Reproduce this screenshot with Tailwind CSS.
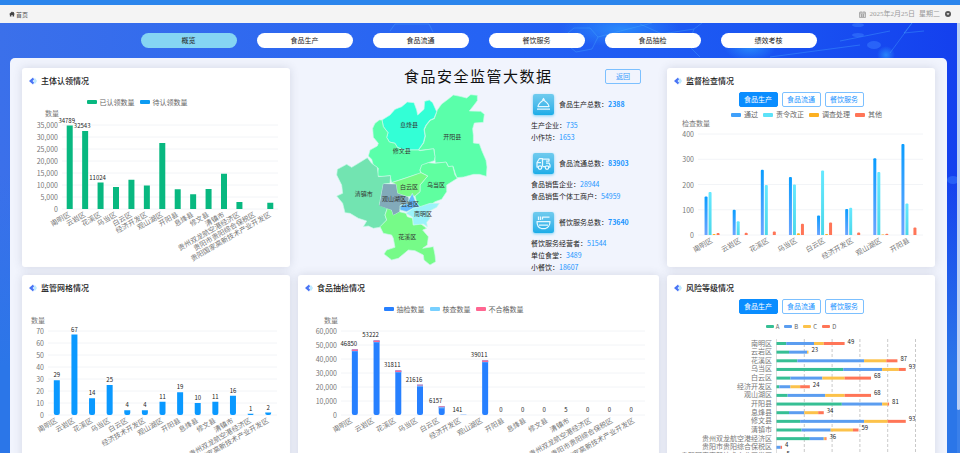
<!DOCTYPE html>
<html lang="zh-CN">
<head>
  <meta charset="UTF-8">
  <meta name="viewport" content="width=device-width, initial-scale=1.0">
  <title>食品安全监管大数据</title>
  <script src="https://cdn.jsdelivr.net/npm/@tailwindcss/browser@4"></script>
</head>
<body class="h-screen overflow-hidden flex flex-col bg-[#2b73e8] text-[7px] text-[#222] font-['Noto_Sans_CJK_SC',sans-serif]">
  <!-- 顶部 -->
  <div class="h-[5px] shrink-0 bg-[#2b85ec]"></div>
  <header class="h-[18px] shrink-0 px-[9px] flex items-center justify-between bg-[#f4f4f4] text-[#555]">
    <a href="#" class="flex items-center gap-px text-[6px]">
      <svg class="size-[6px]" viewBox="0 0 12 12" fill="#444"><path d="M6 1 0 6.500h1.800V11h3V8h2.400v3h3V6.500H12L10 4.600V2H8.500v1.300z"/></svg>
      首页
    </a>
    <div class="flex items-center gap-1 text-[#999] font-['Liberation_Serif','Noto_Sans_CJK_SC',serif]">
      <svg class="size-[7px]" viewBox="0 0 14 14" fill="none" stroke="#999" stroke-width="1.500"><path d="M1 2.500h12v10.500H1zM1 5.500h12M4 .5v3M10 .5v3M3 8h8M3 10.500h8M5 6v6M9 6v6"/></svg>
      <span>2025年2月25日</span>
      <span>星期二</span>
      <svg class="size-[6px] ml-px" viewBox="0 0 12 12"><circle cx="6" cy="6" r="6" fill="#555"/><path d="M3 4.500h6L6 8.500z" fill="#f4f4f4"/></svg>
    </div>
  </header>

  <div class="flex-1 min-h-0 flex">
    <div class="relative flex-1 min-w-0 flex flex-col bg-linear-to-b from-[#3a6fea] to-[#2b76e8]">
      <!-- 背景 -->
      <svg class="absolute inset-0 size-full" viewBox="0 0 957 430" preserveAspectRatio="xMidYMin slice" fill="none">
        <defs>
          <linearGradient id="sky"><stop offset="0" stop-color="#3b70ea"/><stop offset=".5" stop-color="#2563f4"/><stop offset=".8" stop-color="#1a55f2"/><stop offset="1" stop-color="#1440ee"/></linearGradient>
          <linearGradient id="fade" x2="0" y2="1"><stop offset=".35" stop-color="#2b76e8" stop-opacity="0"/><stop offset=".8" stop-color="#2b76e8"/></linearGradient>
          <radialGradient id="glow"><stop offset="0" stop-color="#2f9dff" stop-opacity=".7"/><stop offset="1" stop-color="#2f9dff" stop-opacity="0"/></radialGradient>
        </defs>
        <rect width="957" height="430" fill="url(#sky)"/>
        <rect width="957" height="430" fill="url(#fade)"/>
        <ellipse cx="620" cy="6" rx="60" ry="18" fill="url(#glow)"/>
        <ellipse cx="750" cy="24" rx="26" ry="14" fill="url(#glow)"/>
        <circle cx="886" cy="32" r="9" fill="url(#glow)"/>
        <g stroke="#4ab0ff" stroke-opacity=".35">
          <path d="M390 8l5-7h34l4 8M568 10l6-5h16l8 9-6 12-16 3-6-5M598 14l30-8 24-6M640 1l22 10 32-5 8-6M694 6l-6 16 12 12M890 30l22-30M912 0l-8 10 20-2M840 18l50-10M770 34l90-12"/>
        </g>
        <g fill="#3c7dff" fill-opacity=".5"><ellipse cx="858" cy="2" rx="6" ry="2"/><ellipse cx="858" cy="12" rx="6" ry="2"/><ellipse cx="874" cy="22" rx="7" ry="4"/><ellipse cx="953" cy="157" rx="6" ry="4"/></g>
      </svg>

      <!-- 导航 -->
      <nav class="relative flex justify-center gap-5 py-[10px]">
        <a href="#" class="w-24 h-[15px] rounded-full bg-[#85d5f3] flex items-center justify-center">概览</a>
        <a href="#" class="w-24 h-[15px] rounded-full bg-white flex items-center justify-center">食品生产</a>
        <a href="#" class="w-24 h-[15px] rounded-full bg-white flex items-center justify-center">食品流通</a>
        <a href="#" class="w-24 h-[15px] rounded-full bg-white flex items-center justify-center">餐饮服务</a>
        <a href="#" class="w-24 h-[15px] rounded-full bg-white flex items-center justify-center">食品抽检</a>
        <a href="#" class="w-24 h-[15px] rounded-full bg-white flex items-center justify-center">绩效考核</a>
      </nav>

      <main class="relative flex-1 min-h-0 overflow-hidden mx-[10px] px-3 pt-[10px] rounded-t-[5px] bg-[#f1f4fd]">
        <div class="grid grid-cols-[268fr_361fr_268fr] gap-2">
          <!-- 主体认领情况 -->
          <section class="rounded-[3px] bg-white shadow-[0_0_10px_rgba(60,70,100,0.16)]">
            <h2 class="h-6 pt-0.5 pl-[7px] flex items-center gap-1 text-[8px] font-medium">
              <svg class="w-2 h-2" viewBox="0 0 16 16"><path d="M9 3h4l3 5-3 5H9z" fill="#bfeaff"/><path d="M8 1 0 8l8 7 2-4-3-3 3-3z" fill="#4a74f5"/></svg>主体认领情况
            </h2>
            <div class="h-5 pr-[38px] flex items-center justify-center gap-[5px] text-[#666]">
              <span class="flex items-center gap-[3px]"><i class="w-[10px] h-1 rounded-[1px] bg-[#08b880]"></i>已认领数量</span>
              <span class="flex items-center gap-[3px]"><i class="w-[10px] h-1 rounded-[1px] bg-[#0c9bf2]"></i>待认领数量</span>
            </div>
            <svg id="claim-chart" class="block w-full overflow-visible" viewBox="0 0 268 155"></svg>
          </section>

          <!-- 中间地图 -->
          <section class="-mb-2">
            <div class="h-4 flex items-center">
              <h1 class="flex-1 pl-[106px] text-[15px] leading-4 tracking-widest whitespace-nowrap text-[#111]">食品安全监管大数据</h1>
              <button class="w-9 h-[15px] mr-[18px] rounded-[2px] border border-[#7cc0ff] text-[#3a9dfc] leading-none">返回</button>
            </div>
            <div class="flex pl-[22px]">
              <svg class="w-[200px] h-[191px] shrink-0" viewBox="0 72 600 573" stroke="#c8fbe8" stroke-width="2" stroke-linejoin="round">
                <path fill="#5affaa" d="M352 150l13-18 20-15 15-12 20 4 20 5 12-10 20 2v16l-12 16-12 15 34 1 11 9-3 24-27 2-5 17 2 20v23l18 2 8 22 12 28 3 20-2 28-21-6-17 0-30 8-20 2-5-12-7-22-13 2-7-14-33 2-4-42-41 4-5-2 15-20 5-20-3-20 6-13 12-15 12-5z"/>
                <path fill="#33ffd6" d="M186 180l24-15 15-17 20-8 17-14 20 2 8 22 3 15 19-17 2-24 14-4 10 8 8 18 4 9-8 20-12 5-12 15-6 13 3 20-5 20-15 22h-45l-18-8-7-12-17-4-8-14 4-14-14-18z"/>
                <path fill="#5affaa" d="M178 180l8 0 4 20 14 18-4 14 8 14 17 4 7 12 18 8h45l5 2 41-6 4 24-2 12-18 6-20 12-5 10 3 12-18 3-30 10-40 13-5-21-20 3-18-2 3-23-15-10-5-17-10-10 5-18 22-12 3-8-15-18-2-27 7-15z"/>
                <path fill="#72e4b1" d="M142 293l13 17 17 12 3 28 37-3-2 23-20 2-12 63 24 10-7 20 5 15-20 22-20 3-15-7-15 2 10-17-25-8-25-15-15-2-7-28-18-22 18-8-3-25-15-30 2-17 28-15 15 9 20-12z"/>
                <path fill="#5fffa0" d="M300 330l5-15 20-7 20 2 33-4 7 14 13-2 7 27 7 10-32 20v20l-15 23-20 7-20 15-30 5-10-37 15-13v-20l23-27-20-10z"/>
                <path fill="#76fb88" d="M202 445l13 5 5 15 18-10 20 5 4 10 16 5 2 20 20-5 20 15-12 5 17 20-3 25-14 10 32-5 5 25 2 20-17 10-18-15-2-15-25-13-20-2-30 25-20 5-23-18 8-12 25-8-5-27-5-10-25-5-10-20 20-20-5-15z"/>
                <path fill="#79fb86" d="M215 368l45-15 43-15 20 10-23 27v20l-15 13-23 2-30-10-4-27z"/>
                <path fill="#82aaba" stroke="none" d="M190 372l38 1 4 27 33 12 3 16-26 7-4 20-18 10-5-15-37-13z"/>
                <path fill="#66bbfd" d="M265 422l12-22 10 25 13 15-20 5-20 10-20-5v-13l28-9z"/>
                <path fill="#9bf3fa" d="M258 460l22-15 20-5 30-10 28 0-8 12-25 13 5 20-10 12 2 13-12-8-30 3-2-23z"/>
                <g class="text-[18px]" fill="#333" stroke="none" text-anchor="middle">
                  <text x="267" y="202">息烽县</text><text x="397" y="237">开阳县</text><text x="245" y="278">修文县</text>
                  <text x="131" y="407">清镇市</text><text x="267" y="386">白云区</text><text x="348" y="381">乌当区</text>
                  <text x="222" y="423">观山湖区</text><text x="270" y="438">云岩区</text><text x="309" y="469">南明区</text><text x="262" y="538">花溪区</text>
                </g>
              </svg>
              <!-- 统计 -->
              <div class="ml-[11px] pt-[9px] whitespace-nowrap leading-3">
                <div class="h-[22px] mb-1 pl-0.5 flex items-center gap-[5px]">
                  <span class="size-[21px] rounded-[2px] flex items-center justify-center bg-linear-to-b from-[#6fcbee] to-[#18ade8] shadow-[0_1px_3px_#7cd0f5]">
                    <svg class="size-[15px]" viewBox="0 0 30 30" fill="none" stroke="#e6f8ff" stroke-width="2.500" stroke-linejoin="round"><path d="M4 19c1-6 5-9 11-13 6 4 10 7 11 13zM2 24h26M13 6l2-3 2 3"/></svg>
                  </span>
                  <span>食品生产总数：<b class="text-[#1a94ff]">2388</b></span>
                </div>
                <p>生产企业：<span class="text-[#1a94ff]">735</span></p>
                <p>小作坊：<span class="text-[#1a94ff]">1653</span></p>
                <div class="h-[22px] mt-[9px] mb-1 pl-0.5 flex items-center gap-[5px]">
                  <span class="size-[21px] rounded-[2px] flex items-center justify-center bg-linear-to-b from-[#6fcbee] to-[#18ade8] shadow-[0_1px_3px_#7cd0f5]">
                    <svg class="size-[15px]" viewBox="0 0 30 30" fill="none" stroke="#e6f8ff" stroke-width="2.500" stroke-linejoin="round"><path d="M4 22H2v-9l5-8h6v16M13 6h13v4h-6M20 14h6l2 4v4h-2M2 13h8M13 21h5"/><circle cx="8" cy="23" r="3.500"/><circle cx="22" cy="23" r="3.500"/></svg>
                  </span>
                  <span>食品流通总数：<b class="text-[#1a94ff]">83903</b></span>
                </div>
                <p>食品销售企业：<span class="text-[#1a94ff]">28944</span></p>
                <p>食品销售个体工商户：<span class="text-[#1a94ff]">54959</span></p>
                <div class="h-[22px] mt-[9px] mb-1 pl-0.5 flex items-center gap-[5px]">
                  <span class="size-[21px] rounded-[2px] flex items-center justify-center bg-linear-to-b from-[#6fcbee] to-[#18ade8] shadow-[0_1px_3px_#7cd0f5]">
                    <svg class="size-[15px]" viewBox="0 0 30 30" fill="none" stroke="#e6f8ff" stroke-width="2.500" stroke-linejoin="round"><path d="M2 13h26c0 8-5 13-9 14h-8C6 26 2 21 2 13zM6 20h18M5 3v7M9 3v7M13 9V4h14"/></svg>
                  </span>
                  <span>餐饮服务总数：<b class="text-[#1a94ff]">73640</b></span>
                </div>
                <p>餐饮服务经营者：<span class="text-[#1a94ff]">51544</span></p>
                <p>单位食堂：<span class="text-[#1a94ff]">3489</span></p>
                <p>小餐饮：<span class="text-[#1a94ff]">18607</span></p>
              </div>
            </div>
          </section>

          <!-- 监督检查情况 -->
          <section class="rounded-[3px] bg-white shadow-[0_0_10px_rgba(60,70,100,0.16)]">
            <h2 class="h-6 pt-0.5 pl-[7px] flex items-center gap-1 text-[8px] font-medium">
              <svg class="w-2 h-2" viewBox="0 0 16 16"><path d="M9 3h4l3 5-3 5H9z" fill="#bfeaff"/><path d="M8 1 0 8l8 7 2-4-3-3 3-3z" fill="#4a74f5"/></svg>监督检查情况
            </h2>
            <div class="flex justify-center gap-1">
              <button class="w-[39px] h-[15px] rounded-[2px] border border-[#0a8dff] bg-[#0a8dff] text-white leading-none">食品生产</button>
              <button class="w-[39px] h-[15px] rounded-[2px] border border-[#7cc0ff] text-[#1a94ff] leading-none">食品流通</button>
              <button class="w-[39px] h-[15px] rounded-[2px] border border-[#7cc0ff] text-[#1a94ff] leading-none">餐饮服务</button>
            </div>
            <div class="h-[15px] pl-[11px] flex items-center justify-center gap-[5px] text-[#666]">
              <span class="flex items-center gap-[3px]"><i class="w-[10px] h-1 rounded-[1px] bg-[#3fa0fb]"></i>通过</span>
              <span class="flex items-center gap-[3px]"><i class="w-[10px] h-1 rounded-[1px] bg-[#5ce2f8]"></i>责令改正</span>
              <span class="flex items-center gap-[3px]"><i class="w-[10px] h-1 rounded-[1px] bg-[#fcb021]"></i>调查处理</span>
              <span class="flex items-center gap-[3px]"><i class="w-[10px] h-1 rounded-[1px] bg-[#ff7557]"></i>其他</span>
            </div>
            <svg id="check-chart" class="block w-full overflow-visible" viewBox="0 0 268 145"></svg>
          </section>

          <!-- 监管网格情况 -->
          <section class="rounded-[3px] bg-white shadow-[0_0_10px_rgba(60,70,100,0.16)]">
            <h2 class="h-6 pt-0.5 pl-[7px] flex items-center gap-1 text-[8px] font-medium">
              <svg class="w-2 h-2" viewBox="0 0 16 16"><path d="M9 3h4l3 5-3 5H9z" fill="#bfeaff"/><path d="M8 1 0 8l8 7 2-4-3-3 3-3z" fill="#4a74f5"/></svg>监管网格情况
            </h2>
            <svg id="grid-chart" class="block w-full overflow-visible" viewBox="0 0 268 180"></svg>
          </section>

          <!-- 食品抽检情况 -->
          <section class="rounded-[3px] bg-white shadow-[0_0_10px_rgba(60,70,100,0.16)]">
            <h2 class="h-6 pt-0.5 pl-[7px] flex items-center gap-1 text-[8px] font-medium">
              <svg class="w-2 h-2" viewBox="0 0 16 16"><path d="M9 3h4l3 5-3 5H9z" fill="#bfeaff"/><path d="M8 1 0 8l8 7 2-4-3-3 3-3z" fill="#4a74f5"/></svg>食品抽检情况
            </h2>
            <div class="h-5 pr-[50px] flex items-center justify-center gap-[5px] text-[#666]">
              <span class="flex items-center gap-[3px]"><i class="w-[10px] h-1 rounded-[1px] bg-[#2780ff]"></i>抽检数量</span>
              <span class="flex items-center gap-[3px]"><i class="w-[10px] h-1 rounded-[1px] bg-[#78d0ff]"></i>核查数量</span>
              <span class="flex items-center gap-[3px]"><i class="w-[10px] h-1 rounded-[1px] bg-[#ff6691]"></i>不合格数量</span>
            </div>
            <svg id="sample-chart" class="block w-full overflow-visible" viewBox="0 0 361 160"></svg>
          </section>

          <!-- 风险等级情况 -->
          <section class="rounded-[3px] bg-white shadow-[0_0_10px_rgba(60,70,100,0.16)]">
            <h2 class="h-6 pt-0.5 pl-[7px] flex items-center gap-1 text-[8px] font-medium">
              <svg class="w-2 h-2" viewBox="0 0 16 16"><path d="M9 3h4l3 5-3 5H9z" fill="#bfeaff"/><path d="M8 1 0 8l8 7 2-4-3-3 3-3z" fill="#4a74f5"/></svg>风险等级情况
            </h2>
            <div class="flex justify-center gap-1">
              <button class="w-[39px] h-[15px] rounded-[2px] border border-[#0a8dff] bg-[#0a8dff] text-white leading-none">食品生产</button>
              <button class="w-[39px] h-[15px] rounded-[2px] border border-[#7cc0ff] text-[#1a94ff] leading-none">食品流通</button>
              <button class="w-[39px] h-[15px] rounded-[2px] border border-[#7cc0ff] text-[#1a94ff] leading-none">餐饮服务</button>
            </div>
            <div class="h-[25px] flex items-center justify-center gap-[5px] text-[6px] text-[#666]">
              <span class="flex items-center gap-0.5"><i class="w-2 h-[3px] rounded-[1px] bg-[#36bf94]"></i>A</span>
              <span class="flex items-center gap-0.5"><i class="w-2 h-[3px] rounded-[1px] bg-[#5b9df0]"></i>B</span>
              <span class="flex items-center gap-0.5"><i class="w-2 h-[3px] rounded-[1px] bg-[#fcc24a]"></i>C</span>
              <span class="flex items-center gap-0.5"><i class="w-2 h-[3px] rounded-[1px] bg-[#ff7557]"></i>D</span>
            </div>
            <svg id="risk-chart" class="block w-full overflow-visible" viewBox="0 0 268 135"></svg>
          </section>
        </div>
      </main>
    </div>

    <!-- 滚动条 -->
    <div class="w-[3px] bg-[#3a80ea]"><div class="h-9/10 rounded-b-full bg-[#bacff4]"></div></div>
  </div>

  <script>
    // 柱子路径，可选上圆角或下圆角
    function barPath(x, y, w, h, top, bottom) {
      const t = Math.min(top, h), b = Math.min(bottom, h);
      return `M${x} ${y + t}q0 ${-t} ${t} ${-t}h${w - 2 * t}q${t} 0 ${t} ${t}V${y + h - b}q0 ${b} ${-b} ${b}h${-(w - 2 * b)}q${-b} 0 ${-b} ${-b}z`;
    }

    // 坐标轴、网格线和斜排的区域名称
    function drawAxis(c) {
      let out = `<text x="${c.left - 4 - c.nameShift}" y="${c.nameY}" text-anchor="${c.nameAnchor || 'end'}" fill="#777" font-size="7">${c.name}</text>`;
      for (let v = 0; v <= c.max; v += c.step) {
        const y = c.bottom - (c.bottom - c.top) * v / c.max;
        out += `<path d="M${c.left} ${y}H${c.right}" stroke="#f2f4f7" stroke-width="1"/>`;
        out += `<text x="${c.left - 4}" y="${y + 3}" text-anchor="end" fill="#777" font-size="7">${v.toLocaleString('en-US')}</text>`;
      }
      const pitch = (c.right - c.left) / c.areas.length;
      c.areas.forEach((area, i) => {
        const x = c.left + pitch * (i + 0.5);
        out += `<text transform="translate(${x + 1} ${c.bottom + 7}) rotate(-30)" text-anchor="end" fill="#777" font-size="7">${area}</text>`;
      });
      return out;
    }

    function drawBars(id, c) {
      let out = (c.defs || '') + drawAxis(c);
      const pitch = (c.right - c.left) / c.areas.length;
      const scale = (c.bottom - c.top) / c.max;
      c.series.forEach(s => {
        s.data.forEach((v, i) => {
          const x = c.left + pitch * (i + 0.5) + s.offset;
          const h = v * scale;
          if (v) out += `<path d="${barPath(x - s.width / 2, c.bottom - h, s.width, h, s.roundTop || 0, s.roundBottom || 0)}" fill="${s.color}"/>`;
          if (s.caps && v > 1000) {
            out += `<rect x="${x - s.width / 2}" y="${c.bottom - h}" width="${s.width}" height="2" fill="#78b8ff"/>`;
            out += `<rect x="${x - s.width / 2}" y="${c.bottom - h}" width="${s.width}" height="${v > 30000 ? 1.5 : 0.7}" fill="#ff6691"/>`;
          }
          if (s.label && s.label(i)) out += `<text x="${x + (s.labelShift || 0)}" y="${c.bottom - h - 3}" text-anchor="middle" fill="#222" font-size="6">${v}</text>`;
        });
      });
      document.getElementById(id).innerHTML = out;
    }

    const areas = ['南明区', '云岩区', '花溪区', '乌当区', '白云区', '经济开发区', '观山湖区', '开阳县', '息烽县', '修文县', '清镇市', '贵州双龙航空港经济区', '贵阳市贵阳综合保税区', '贵阳国家高新技术产业开发区'];

    drawBars('claim-chart', {
      name: '数量', nameShift: -1, nameY: 4, left: 40, right: 256, top: 13, bottom: 97, max: 35000, step: 5000, areas,
      series: [{ offset: 0, width: 6, color: '#08b880', label: i => i < 3, labelShift: -3,
        data: [34789, 32543, 11024, 9200, 12200, 9800, 27500, 8200, 6100, 8300, 14700, 2900, 0, 2600] }]
    });

    drawBars('check-chart', {
      defs: '<defs><linearGradient id="pass" x2="0" y2="1"><stop stop-color="#0a9dff"/><stop offset="1" stop-color="#6aa4ff"/></linearGradient><linearGradient id="fix" x2="0" y2="1"><stop stop-color="#66e8ff"/><stop offset="1" stop-color="#4ad8ea"/></linearGradient></defs>',
      name: '检查数量', nameShift: 12, nameAnchor: 'start', nameY: 4, left: 31, right: 256, top: 12, bottom: 113, max: 400, step: 100, areas: areas.slice(0, 8),
      series: [
        { offset: -6, width: 3, roundTop: 1, color: 'url(#pass)', data: [152, 100, 258, 230, 77, 103, 304, 360] },
        { offset: -2, width: 3, roundTop: 1, color: 'url(#fix)', data: [170, 54, 198, 200, 255, 108, 250, 125] },
        { offset: 2, width: 3, roundTop: 1, color: '#fcb021', data: [4, 0, 0, 7, 4, 0, 2, 0] },
        { offset: 6, width: 3, roundTop: 1, color: '#ff7557', data: [8, 9, 14, 45, 50, 10, 5, 30] }
      ]
    });

    drawBars('grid-chart', {
      name: '数量', nameShift: -1, nameY: 24, left: 26, right: 255, top: 32, bottom: 116, max: 70, step: 10,
      areas: ['南明区', '云岩区', '花溪区', '乌当区', '白云区', '经济技术开发区', '观山湖区', '开阳县', '息烽县', '修文县', '清镇市', '贵州双龙航空港经济区', '贵阳国家高新技术产业开发区'],
      series: [{ offset: 0, width: 6, roundBottom: 2, color: '#0a99ff', label: () => true,
        data: [29, 67, 14, 25, 4, 4, 11, 19, 10, 11, 16, 1, 2] }]
    });

    drawBars('sample-chart', {
      name: '数量', nameShift: -1, nameY: 4, left: 43, right: 347, top: 12, bottom: 96, max: 60000, step: 10000, areas,
      series: [{ offset: 3, width: 6, roundBottom: 2, color: '#2780ff', caps: true, label: () => true, labelShift: -6,
        data: [46850, 53222, 31811, 21616, 6157, 141, 39011, 0, 0, 0, 5, 0, 0, 0] }]
    });

    // 风险等级 A/B/C/D
    const risks = [[7, 20, 7, 15], [9, 13, 1, 0], [15, 48, 16, 8], [48, 28, 12, 5], [10, 23, 16, 19], [2, 8, 7, 7], [8, 27, 14, 19], [47, 29, 4, 1], [9, 11, 10, 4], [17, 46, 17, 13], [18, 21, 16, 4], [24, 10, 1, 1], [0, 3, 0, 1], [1, 2, 1, 1]];
    const levelColors = ['#36bf94', '#5b9df0', '#fcc24a', '#ff7557'];
    let risk = '';
    for (let v = 0; v <= 5; v++) {
      risk += `<path d="M${109.5 + v * 27.8} 0V125" stroke="#bbb" stroke-width="${v ? 0.8 : 0.5}" stroke-dasharray="${v ? '3 2' : 'none'}"/>`;
    }
    risks.forEach((row, i) => {
      const y = 4.5 + i * 8.65;
      let x = 109.5;
      risk += `<text x="105" y="${y + 2}" text-anchor="end" fill="#777" font-size="7">${areas[i]}</text>`;
      row.forEach((v, k) => {
        risk += `<rect x="${x}" y="${y - 1.5}" width="${v * 1.39}" height="3" fill="${levelColors[k]}"/>`;
        x += v * 1.39;
      });
      risk += `<text x="${x + 3}" y="${y}" fill="#222" font-size="6">${row.reduce((a, b) => a + b)}</text>`;
    });
    document.getElementById('risk-chart').innerHTML = risk;
  </script>
</body>
</html>
